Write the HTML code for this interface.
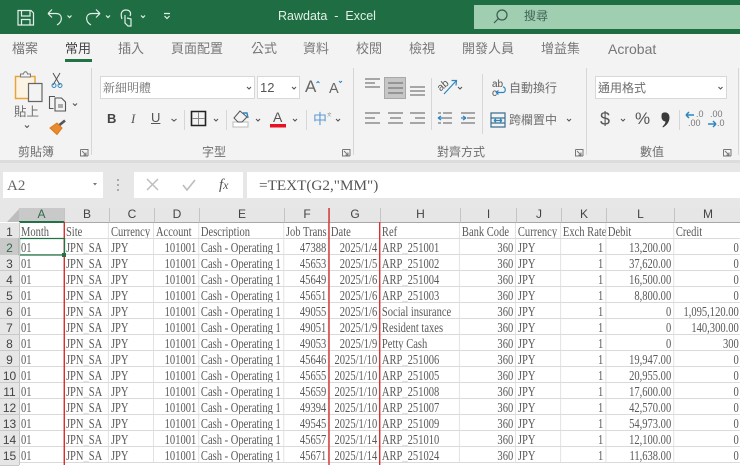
<!DOCTYPE html>
<html><head><meta charset="utf-8"><style>
html,body{margin:0;padding:0}
body{width:740px;height:465px;overflow:hidden;position:relative;background:#fff;font-family:"Liberation Sans","Noto Sans CJK TC",sans-serif;filter:blur(.35px)}
.a{position:absolute;white-space:nowrap}
.t{position:absolute;white-space:nowrap;color:#777;font-size:13px;line-height:16px}
.rb{font-size:12.5px;color:#6e6e6e}
#svg{position:absolute;left:0;top:0}
#grid{position:absolute;left:19px;top:222.5px;width:950px;transform:scaleX(.78);transform-origin:0 0;font-family:"Liberation Serif","Noto Serif CJK TC",serif;font-size:13.5px;color:#595959}
.r{display:flex;height:16.05px;line-height:18px}
.r i{font-style:normal;display:block;box-sizing:border-box;height:16.05px;border-right:1px solid #dadada;border-bottom:1px solid #dadada;padding:0 2.5px;overflow:hidden;white-space:pre}
.r b{font-weight:normal;color:#cfcfcf}
.r i:nth-child(1){width:calc(45px/.78)}
.r i:nth-child(2){width:calc(45px/.78)}
.r i:nth-child(3){width:calc(45px/.78)}
.r i:nth-child(4){width:calc(45px/.78);text-align:right}
.r i:nth-child(5){width:calc(85px/.78)}
.r i:nth-child(6){width:calc(45px/.78);text-align:right}
.r i:nth-child(7){width:calc(51px/.78);text-align:right}
.r i:nth-child(8){width:calc(80px/.78)}
.r i:nth-child(9){width:calc(56px/.78);text-align:right}
.r i:nth-child(10){width:calc(45px/.78)}
.r i:nth-child(11){width:calc(45px/.78);text-align:right}
.r i:nth-child(12){width:calc(68px/.78);text-align:right}
.r i:nth-child(13){width:calc(66px/.78);text-align:right;border-right:0;padding-right:1.5px}
.r.h i{text-align:left}
.ch{position:absolute;top:208px;height:14px;line-height:12px;text-align:center;font-size:12px;color:#444;background:#e6e6e6;border-right:1px solid #c4c4c4;border-bottom:1px solid #a8a8a8}
.rh{position:absolute;left:0;width:19px;height:15px;line-height:18px;text-align:center;font-size:12px;color:#444;background:#e6e6e6;border-bottom:1px solid #c9c9c9}
</style></head><body>

<div class="a" style="left:0;top:0;width:740px;height:34px;background:#1f6e43"></div>
<div class="a" style="left:474px;top:5px;width:266px;height:24px;background:#9fceb0"></div>
<div class="a" style="left:278px;top:8px;font-size:12.5px;line-height:17px;color:#e3efe8;white-space:pre">Rawdata  -  Excel</div>
<div class="a" style="left:524px;top:8px;font-size:12px;line-height:17px;color:#44665a">搜尋</div>

<div class="a" style="left:0;top:34px;width:740px;height:126px;background:#f3f3f3"></div>
<div class="a" style="left:0;top:160px;width:740px;height:62px;background:#e7e7e7"></div>
<div class="a" style="left:0;top:160px;width:740px;height:3px;background:#dcdcdc"></div>

<div class="t" style="left:12px;top:41px">檔案</div>
<div class="t" style="left:65px;top:41px;color:#444">常用</div>
<div class="a" style="left:65px;top:59px;width:27px;height:2.5px;background:#217346"></div>
<div class="t" style="left:118px;top:41px">插入</div>
<div class="t" style="left:171px;top:41px">頁面配置</div>
<div class="t" style="left:251px;top:41px">公式</div>
<div class="t" style="left:303px;top:41px">資料</div>
<div class="t" style="left:356px;top:41px">校閱</div>
<div class="t" style="left:409px;top:41px">檢視</div>
<div class="t" style="left:462px;top:41px">開發人員</div>
<div class="t" style="left:541px;top:41px">增益集</div>
<div class="t" style="left:608px;top:41px;font-size:14px">Acrobat</div>

<div class="a" style="left:100px;top:76px;width:155px;height:23px;background:#fff;border:1px solid #d8d8d8;box-sizing:border-box"></div>
<div class="a" style="left:257px;top:76px;width:43px;height:23px;background:#fff;border:1px solid #d8d8d8;box-sizing:border-box"></div>
<div class="a" style="left:595px;top:76px;width:132px;height:23px;background:#fff;border:1px solid #d8d8d8;box-sizing:border-box"></div>
<div class="a" style="left:384px;top:77px;width:22px;height:22px;background:#c6c6c6;border:1px solid #a8a8a8;box-sizing:border-box"></div>

<div class="t rb" style="left:103px;top:80px;font-family:'Noto Serif CJK TC',serif;font-size:12px">新細明體</div>
<div class="t" style="left:260px;top:80px;font-size:13px;color:#555">12</div>
<div class="t" style="left:305px;top:77px;font-size:17px;line-height:20px;color:#666">A</div>
<div class="t" style="left:329px;top:79px;font-size:14.5px;line-height:20px;color:#666">A</div>
<div class="t" style="left:107px;top:111px;font-size:13px;font-weight:bold;color:#444">B</div>
<div class="t" style="left:131px;top:111px;font-size:13px;font-style:italic;color:#555;font-family:'Liberation Serif',serif">I</div>
<div class="t" style="left:151px;top:110px;font-size:13px;color:#555;text-decoration:underline">U</div>
<div class="t" style="left:273px;top:109px;font-size:14px;color:#555">A</div>
<div class="t" style="left:313px;top:111px;font-size:14px;color:#5b9bd5">中</div>
<div class="t" style="left:327px;top:112px;font-size:4.5px;line-height:5px;color:#888;white-space:normal;width:6px">文</div>

<div class="t rb" style="left:14px;top:104px;font-size:12.5px">貼上</div>
<div class="t rb" style="left:18px;top:144px;font-size:12px">剪貼簿</div>
<div class="t rb" style="left:202px;top:144px;font-size:12px">字型</div>
<div class="t rb" style="left:437px;top:144px;font-size:12px">對齊方式</div>
<div class="t rb" style="left:640px;top:144px;font-size:12px">數值</div>
<div class="t rb" style="left:509px;top:80px;font-size:12px">自動換行</div>
<div class="t rb" style="left:509px;top:112px;font-size:12px">跨欄置中</div>
<div class="t rb" style="left:598px;top:80px;font-size:12px">通用格式</div>
<div class="t" style="left:600px;top:109px;font-size:18px;line-height:20px;color:#555">$</div>
<div class="t" style="left:635px;top:109px;font-size:17px;line-height:20px;color:#555">%</div>
<div class="t" style="left:696px;top:110px;font-size:9px;line-height:9px;color:#777">.0</div>
<div class="t" style="left:688px;top:119px;font-size:9px;line-height:9px;color:#777">.00</div>
<div class="t" style="left:710px;top:110px;font-size:9px;line-height:9px;color:#777">.00</div>
<div class="t" style="left:717px;top:119px;font-size:9px;line-height:9px;color:#777">.0</div>

<div class="a" style="left:3px;top:172px;width:100px;height:26px;background:#fff"></div>
<div class="a" style="left:134px;top:172px;width:109px;height:26px;background:#fff"></div>
<div class="a" style="left:247px;top:172px;width:493px;height:26px;background:#fff"></div>
<div class="a" style="left:7px;top:177px;font-size:15px;line-height:18px;color:#666;font-family:'Liberation Serif',serif">A2</div>
<div class="a" style="left:219px;top:176px;font-size:15px;line-height:18px;color:#555;font-style:italic;font-family:'Liberation Serif',serif">f<span style="font-size:12px">x</span></div>
<div class="a" style="left:259px;top:177px;font-size:15.2px;line-height:18px;color:#555;font-family:'Liberation Serif',serif">=TEXT(G2,"MM")</div>

<div class="ch" style="left:19px;width:45px;background:#c9c9c9;color:#2f6b4a;border-bottom:2px solid #217346;height:13px">A</div>
<div class="ch" style="left:65px;width:44px">B</div>
<div class="ch" style="left:110px;width:44px">C</div>
<div class="ch" style="left:155px;width:44px">D</div>
<div class="ch" style="left:200px;width:84px">E</div>
<div class="ch" style="left:285px;width:44px">F</div>
<div class="ch" style="left:330px;width:50px">G</div>
<div class="ch" style="left:381px;width:79px">H</div>
<div class="ch" style="left:461px;width:55px">I</div>
<div class="ch" style="left:517px;width:44px">J</div>
<div class="ch" style="left:562px;width:44px">K</div>
<div class="ch" style="left:607px;width:67px">L</div>
<div class="ch" style="left:675px;width:66px">M</div>

<div class="rh" style="top:223px">1</div>
<div class="rh" style="top:239px;background:#c9c9c9;color:#2f6b4a">2</div>
<div class="rh" style="top:255px">3</div>
<div class="rh" style="top:271px">4</div>
<div class="rh" style="top:287px">5</div>
<div class="rh" style="top:303px">6</div>
<div class="rh" style="top:319px">7</div>
<div class="rh" style="top:335px">8</div>
<div class="rh" style="top:351px">9</div>
<div class="rh" style="top:367px">10</div>
<div class="rh" style="top:383px">11</div>
<div class="rh" style="top:399px">12</div>
<div class="rh" style="top:415px">13</div>
<div class="rh" style="top:431px">14</div>
<div class="rh" style="top:447px;height:18px">15</div>

<div id="grid">
<div class="r h"><i>Month</i><i>Site</i><i>Currency</i><i>Account</i><i>Description</i><i>Job Trans</i><i>Date</i><i>Ref</i><i>Bank Code</i><i>Currency</i><i>Exch Rate</i><i>Debit</i><i>Credit</i></div>
<div class="r"><i>01</i><i>JPN<b>_</b>SA</i><i>JPY</i><i>101001</i><i>Cash - Operating 1</i><i>47388</i><i>2025/1/4</i><i>ARP<b>_</b>251001</i><i>360</i><i>JPY</i><i>1</i><i>13,200.00</i><i>0</i></div>
<div class="r"><i>01</i><i>JPN<b>_</b>SA</i><i>JPY</i><i>101001</i><i>Cash - Operating 1</i><i>45653</i><i>2025/1/5</i><i>ARP<b>_</b>251002</i><i>360</i><i>JPY</i><i>1</i><i>37,620.00</i><i>0</i></div>
<div class="r"><i>01</i><i>JPN<b>_</b>SA</i><i>JPY</i><i>101001</i><i>Cash - Operating 1</i><i>45649</i><i>2025/1/6</i><i>ARP<b>_</b>251004</i><i>360</i><i>JPY</i><i>1</i><i>16,500.00</i><i>0</i></div>
<div class="r"><i>01</i><i>JPN<b>_</b>SA</i><i>JPY</i><i>101001</i><i>Cash - Operating 1</i><i>45651</i><i>2025/1/6</i><i>ARP<b>_</b>251003</i><i>360</i><i>JPY</i><i>1</i><i>8,800.00</i><i>0</i></div>
<div class="r"><i>01</i><i>JPN<b>_</b>SA</i><i>JPY</i><i>101001</i><i>Cash - Operating 1</i><i>49055</i><i>2025/1/6</i><i>Social insurance</i><i>360</i><i>JPY</i><i>1</i><i>0</i><i>1,095,120.00</i></div>
<div class="r"><i>01</i><i>JPN<b>_</b>SA</i><i>JPY</i><i>101001</i><i>Cash - Operating 1</i><i>49051</i><i>2025/1/9</i><i>Resident taxes</i><i>360</i><i>JPY</i><i>1</i><i>0</i><i>140,300.00</i></div>
<div class="r"><i>01</i><i>JPN<b>_</b>SA</i><i>JPY</i><i>101001</i><i>Cash - Operating 1</i><i>49053</i><i>2025/1/9</i><i>Petty Cash</i><i>360</i><i>JPY</i><i>1</i><i>0</i><i>300</i></div>
<div class="r"><i>01</i><i>JPN<b>_</b>SA</i><i>JPY</i><i>101001</i><i>Cash - Operating 1</i><i>45646</i><i>2025/1/10</i><i>ARP<b>_</b>251006</i><i>360</i><i>JPY</i><i>1</i><i>19,947.00</i><i>0</i></div>
<div class="r"><i>01</i><i>JPN<b>_</b>SA</i><i>JPY</i><i>101001</i><i>Cash - Operating 1</i><i>45655</i><i>2025/1/10</i><i>ARP<b>_</b>251005</i><i>360</i><i>JPY</i><i>1</i><i>20,955.00</i><i>0</i></div>
<div class="r"><i>01</i><i>JPN<b>_</b>SA</i><i>JPY</i><i>101001</i><i>Cash - Operating 1</i><i>45659</i><i>2025/1/10</i><i>ARP<b>_</b>251008</i><i>360</i><i>JPY</i><i>1</i><i>17,600.00</i><i>0</i></div>
<div class="r"><i>01</i><i>JPN<b>_</b>SA</i><i>JPY</i><i>101001</i><i>Cash - Operating 1</i><i>49394</i><i>2025/1/10</i><i>ARP<b>_</b>251007</i><i>360</i><i>JPY</i><i>1</i><i>42,570.00</i><i>0</i></div>
<div class="r"><i>01</i><i>JPN<b>_</b>SA</i><i>JPY</i><i>101001</i><i>Cash - Operating 1</i><i>49545</i><i>2025/1/10</i><i>ARP<b>_</b>251009</i><i>360</i><i>JPY</i><i>1</i><i>54,973.00</i><i>0</i></div>
<div class="r"><i>01</i><i>JPN<b>_</b>SA</i><i>JPY</i><i>101001</i><i>Cash - Operating 1</i><i>45657</i><i>2025/1/14</i><i>ARP<b>_</b>251010</i><i>360</i><i>JPY</i><i>1</i><i>12,100.00</i><i>0</i></div>
<div class="r"><i>01</i><i>JPN<b>_</b>SA</i><i>JPY</i><i>101001</i><i>Cash - Operating 1</i><i>45671</i><i>2025/1/14</i><i>ARP<b>_</b>251024</i><i>360</i><i>JPY</i><i>1</i><i>11,638.00</i><i>0</i></div>
</div>

<svg id="svg" width="740" height="465" viewBox="0 0 740 465" fill="none">
<!-- QAT -->
<g stroke="#e3efe8" stroke-width="1.2">
<path d="M18 10.5H31L33.5 13V25H18Z"/><path d="M21.5 10.5V16H30V10.5M21.5 25V19.5H30V25"/>
<path d="M48 13.5H56C63 13.5 63 22 57 25M48 13.5L52 9.5M48 13.5L52 17.5"/>
<path d="M100 13.5H92C85 13.5 85 22 91 25M100 13.5L96 9.5M100 13.5L96 17.5"/>
<path d="M122 19C120 13 122 10 126 10C130 10 131.5 13 130 16M125 15V23L128 26H131V19L127 18"/>
<path d="M67.5 15.5L69.5 17.5L71.5 15.5M106 15.5L108 17.5L110 15.5M141 15.5L143 17.5L145 15.5M164 13.5H170M164.500 16L167 18.500L169.500 16"/>
</g>
<circle cx="502" cy="15" r="5" stroke="#3c5a4e" stroke-width="1.2"/><path d="M498.500 18.500L494 23" stroke="#3c5a4e" stroke-width="1.2"/>

<!-- separators -->
<g stroke="#d6d6d6"><path d="M91.500 68V155M353.500 68V155M586.500 68V155M738.500 68V155M184.500 110V130M226.500 110V130M306.500 110V130M431.500 78V130M482.500 74V134M679.500 110V130"/></g>

<!-- clipboard -->
<path d="M15.500 76.500H35V98.500H15.500Z" fill="#fdf3e2" stroke="#e8a33d" stroke-width="1.500"/>
<path d="M20.500 76.500V74H23.500C24 71 27 71 27.500 74H30.500V77H20.500Z" fill="#f3f3f3" stroke="#7a7a7a"/>
<path d="M28.500 83.500H42V101.500H28.500Z" fill="#f3f3f3" stroke="#666" stroke-width="1.200"/>
<path d="M53 73L60 85M60 73L53 85" stroke="#555"/><circle cx="54" cy="85.500" r="2" stroke="#2e86c1"/><circle cx="60" cy="85.500" r="2" stroke="#2e86c1"/>
<path d="M53.500 108.500H49.500V96.500H55M55 98H61.500L65.500 102V111H55Z" stroke="#555" stroke-width="1.100"/><path d="M58 104H63V108H58Z" fill="#aaa"/>
<path d="M50 128L57 123L62 128L57 134.500Z" fill="#e98a2d" stroke="#d97a1f"/><path d="M59.500 125L65 120.500" stroke="#555" stroke-width="2.600"/>
<g stroke="#555" stroke-width="1.100">
<path d="M25 125.500L27 127.500L29 125.500M73 103.500L75 105.500L77 103.500"/>
<path d="M247 87L249 89L251 87M292 87L294 89L296 87"/>
<path d="M171.500 119L174 121L176.500 119M214 119L216 121L218 119M256 119L258 121L260 119M293 119L295 121L297 119M336 119L338 121L340 119"/>
<path d="M458 87L460 89L462 87M567 119L569 121L571 119M621 119L623 121L625 119M718.500 87L720.500 89L722.500 87"/>
</g>
<path d="M316.500 83L318 81.500L319.500 83" stroke="#2e86c1"/><path d="M339 81L340.500 82.500L342 81" stroke="#2e86c1"/>

<!-- border, fill, font color -->
<path d="M191.500 111.500H205.500V125.500H191.500Z" stroke="#222" stroke-width="1.600"/><path d="M198.500 112V125M192 118.500H205" stroke="#888"/>
<path d="M233 122H248V127H233Z" fill="#fff" stroke="#bbb"/>
<path d="M240 111L247 117L242 122H238L234 118Z" stroke="#555"/><path d="M243 113L247 113L248 118" stroke="#2e86c1" stroke-width="1.400"/>
<path d="M270 124H286V127.500H270Z" fill="#e81123"/>
<!-- comma -->
<path d="M662 113.500C664 111.500 669.500 112 669.500 117.500C669.500 122 666.500 125.500 663 127.500L662.500 126.500C664.500 124.500 665.500 123 665.500 121.500C663.500 121.500 661.500 119.500 661.500 117C661.500 115.500 661.500 114.500 662 113.500Z" fill="#3a3a3a"/>
<!-- alignment -->
<g stroke="#787878" stroke-width="1.200">
<path d="M365 79H380M365 83H375M365 87H380"/>
<path d="M388 83H403M388 88H403M388 93H403"/>
<path d="M410 87H425M410 91H425M410 95H425"/>
<path d="M365 113H380M365 118H375M365 123H380"/>
<path d="M388 113H403M390 118H401M388 123H403"/>
<path d="M410 113H425M415 118H425M410 123H425"/>
<path d="M443 113H452M443 118H452M443 123H452M438 113H441M438 123H441"/>
<path d="M461 113H475M467 118H475M461 123H475"/>
</g>
<g stroke="#2e86c1" stroke-width="1.200">
<path d="M438 118H443M438 118L441 116M438 118L441 120"/>
<path d="M461 118H466M466 118L463 116M466 118L463 120"/>
<path d="M444 94L456 81M451.500 80.500L456.500 80.500L456 85.500"/>
<path d="M496 92.500H503C506 92.500 506 87 503 87M496 92.500L498.500 90.500M496 92.500L498.500 94.500"/>
<path d="M491 113H505V127H491Z" stroke="#3c6e91"/><path d="M491 118H505M491 123H505" stroke="#3c6e91"/>
<path d="M494 120.500H502M494 120.500L496 118.800M494 120.500L496 122.200M502 120.500L500 118.800M502 120.500L500 122.200"/>
<path d="M686 115H694M686 115L689 112M686 115L689 118" stroke-width="1.500"/><path d="M708 124H716M716 124L713 121M716 124L713 127" stroke-width="1.500"/>
</g>
<text x="437" y="90" font-size="10.500" fill="#555" transform="rotate(-40 441 86)" font-family="Liberation Sans">ab</text>
<text x="492" y="87" font-size="10" fill="#555" font-family="Liberation Sans">ab</text>
<text x="492" y="96" font-size="10" fill="#555" font-family="Liberation Sans">c</text>
<!-- launchers -->
<g stroke="#777"><path d="M80.500 149.500H88V156M80.500 149.500V156H88M82 151L86 155M86 152.500V155H83.500"/><path d="M342.500 149.500H350V156M342.500 149.500V156H350M344 151L348 155M348 152.500V155H345.500"/><path d="M575.500 149.500H583V156M575.500 149.500V156H583M577 151L581 155M581 152.500V155H578.500"/><path d="M723.500 149.500H731V156M723.500 149.500V156H731M725 151L729 155M729 152.500V155H726.500"/></g>
<!-- formula -->
<path d="M93 183L97 183L95 185.500Z" fill="#777"/>
<g fill="#aaa"><rect x="117" y="179" width="2" height="2"/><rect x="117" y="184" width="2" height="2"/><rect x="117" y="189" width="2" height="2"/></g>
<path d="M147 179L158 190M158 179L147 190" stroke="#bcbcbc" stroke-width="1.400"/>
<path d="M183 185L187 190L195 180" stroke="#bcbcbc" stroke-width="1.600"/>
<path d="M7 222L19 222L19 209Z" fill="#bdbdbd"/>
<!-- red lines -->
<path d="M64.300 222V465M329 208V465M379.700 222V465" stroke="#d8302f" stroke-width="1.400"/>
<!-- selection -->
<path d="M19.500 238.500H64.500V255H19.500Z" stroke="#217346" stroke-width="1.300"/>
<rect x="62" y="253" width="4" height="4" fill="#217346"/>
<path d="M19.500 222V465" stroke="#c4c4c4"/>
</svg>
</body></html>
